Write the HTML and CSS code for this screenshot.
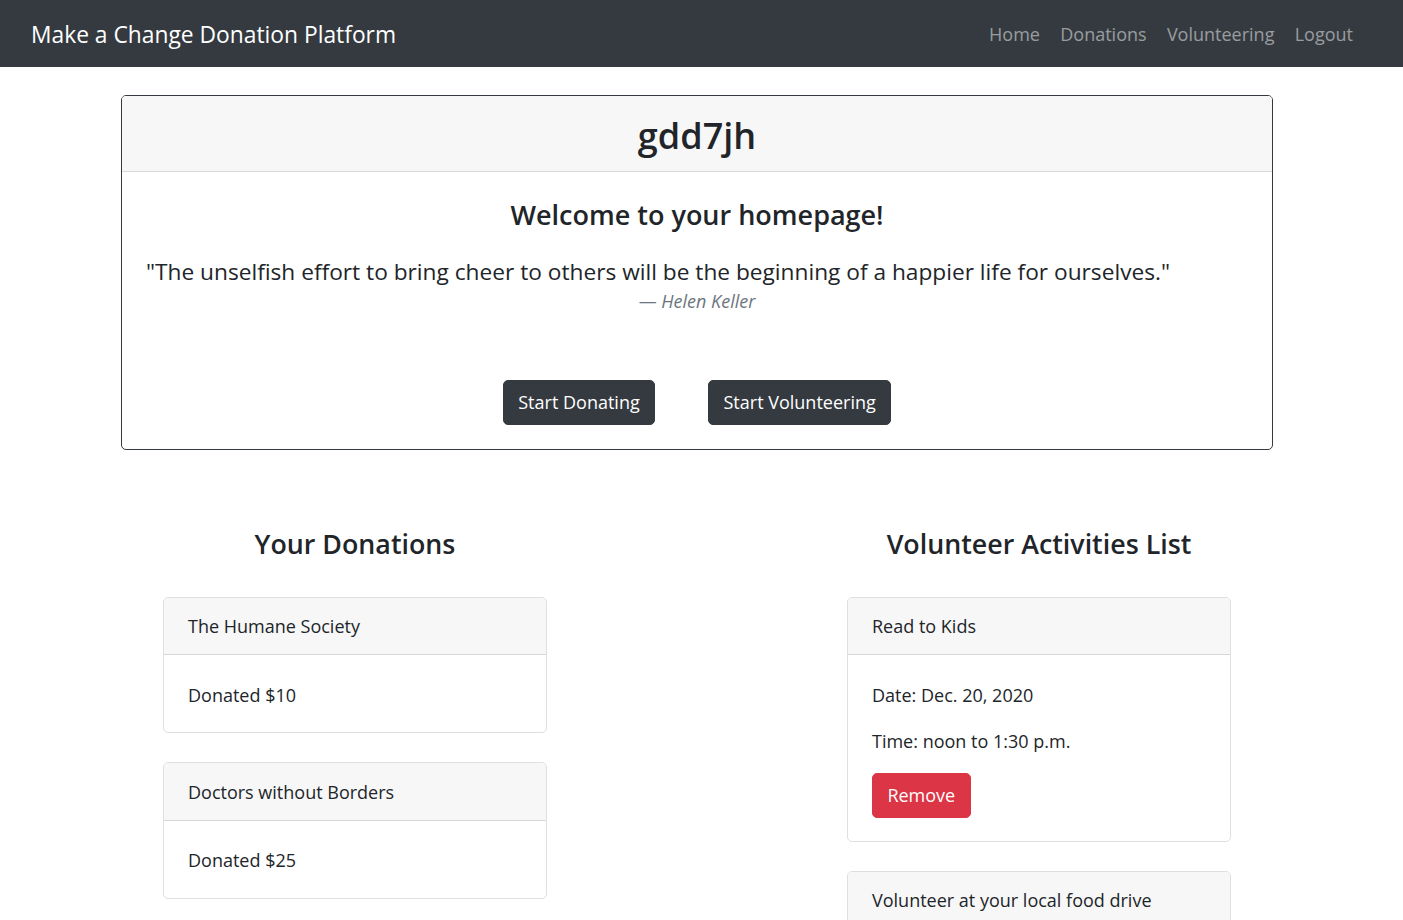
FILE: index.html
```html
<!DOCTYPE html>
<html lang="en">
<head>
<meta charset="utf-8">
<title>Make a Change Donation Platform</title>
<link rel="stylesheet" href="styles.css">
</head>
<body>
<nav class="navbar">
  <a class="brand" href="#">Make a Change Donation Platform</a>
  <ul class="nav-links">
    <li><a href="#">Home</a></li>
    <li><a href="#">Donations</a></li>
    <li><a href="#">Volunteering</a></li>
    <li><a href="#">Logout</a></li>
  </ul>
</nav>

<section class="hero-card">
  <header class="hero-header">
    <h2 class="username">gdd7jh</h2>
  </header>
  <div class="hero-body">
    <h4 class="welcome">Welcome to your homepage!</h4>
    <blockquote class="quote">
      <p class="quote-text">"The unselfish effort to bring cheer to others will be the beginning of a happier life for ourselves."</p>
      <footer class="quote-footer">— <cite>Helen Keller</cite></footer>
    </blockquote>
    <div class="hero-actions">
      <a class="btn btn-dark" href="#">Start Donating</a>
      <a class="btn btn-dark" href="#">Start Volunteering</a>
    </div>
  </div>
</section>

<div class="columns">
  <div class="column">
    <h3 class="section-title">Your Donations</h3>
    <div class="item-card">
      <div class="item-header">The Humane Society</div>
      <div class="item-body"><p>Donated $10</p></div>
    </div>
    <div class="item-card">
      <div class="item-header">Doctors without Borders</div>
      <div class="item-body"><p>Donated $25</p></div>
    </div>
  </div>
  <div class="column">
    <h3 class="section-title">Volunteer Activities List</h3>
    <div class="item-card">
      <div class="item-header">Read to Kids</div>
      <div class="item-body">
        <p>Date: Dec. 20, 2020</p>
        <p>Time: noon to 1:30 p.m.</p>
        <a class="btn btn-danger" href="#">Remove</a>
      </div>
    </div>
    <div class="item-card">
      <div class="item-header">Volunteer at your local food drive</div>
      <div class="item-body">
        <p>Date: Dec. 27, 2020</p>
        <p>Time: 9 a.m. to noon</p>
        <a class="btn btn-danger" href="#">Remove</a>
      </div>
    </div>
  </div>
</div>
</body>
</html>
```

FILE: styles.css
```css
* { box-sizing: border-box; }

body {
  margin: 0;
  font-family: "Open Sans", "Noto Sans", sans-serif;
  font-size: 18px;
  line-height: 28.8px;
  color: #212529;
  background: #fff;
}

a { text-decoration: none; }

.navbar {
  height: 67px;
  background: #343a40;
  display: flex;
  align-items: center;
  justify-content: space-between;
  padding: 2px 50px 0 31px;
}

.brand {
  color: #fff;
  font-size: 22.8px;
  line-height: 36px;
}

.nav-links {
  display: flex;
  list-style: none;
  margin: 0;
  padding: 0;
  gap: 20.3px;
}

.nav-links a {
  color: rgba(255, 255, 255, 0.5);
  font-size: 18px;
}

.hero-card {
  margin: 28px 0 0 121px;
  width: 1152px;
  border: 1px solid #343a40;
  border-radius: 5px;
  overflow: hidden;
}

.hero-header {
  background: #f7f7f7;
  border-bottom: 1px solid rgba(0, 0, 0, 0.125);
  padding: 17px 24px 12px;
  text-align: center;
}

.username {
  margin: 0;
  font-size: 36px;
  line-height: 46px;
  font-weight: 600;
}

.hero-body {
  padding: 24px;
}

.welcome {
  margin: 0 0 20px;
  font-size: 27px;
  line-height: 38px;
  font-weight: 600;
  text-align: center;
}

.quote {
  margin: 0;
}

.quote-text {
  margin: 0;
  font-size: 22.7px;
  line-height: 36px;
}

.quote-footer {
  margin-top: -3px;
  text-align: center;
  color: #6c757d;
  font-size: 18px;
  line-height: 28.8px;
}

.quote-footer cite { font-style: italic; }

.hero-actions {
  margin-top: 64px;
  display: flex;
  justify-content: center;
  gap: 53px;
}

.btn {
  display: inline-block;
  padding: 7px 14.4px;
  border: 1px solid transparent;
  border-radius: 5px;
  color: #fff;
  font-size: 18px;
  line-height: 28.8px;
}

.btn-dark { background: #343a40; border-color: #343a40; }
.btn-danger { background: #dc3545; border-color: #dc3545; }

.columns {
  display: grid;
  grid-template-columns: 684px 684px;
  margin: 74px 0 0 13px;
}

.column {
  display: flex;
  flex-direction: column;
  align-items: center;
}

.section-title {
  margin: 0 0 33px;
  font-size: 26.8px;
  line-height: 40px;
  font-weight: 600;
}

.item-card {
  width: 384px;
  border: 1px solid rgba(0, 0, 0, 0.125);
  border-radius: 5px;
  margin-bottom: 29px;
  overflow: hidden;
}

.item-header {
  background: #f7f7f7;
  border-bottom: 1px solid rgba(0, 0, 0, 0.125);
  padding: 14.4px 24px 13.6px;
}

.item-body {
  padding: 25.5px 24px 22.5px;
}

.item-body p {
  margin: 0 0 17.5px;
}

.item-body p:last-child { margin-bottom: 0; }
```
